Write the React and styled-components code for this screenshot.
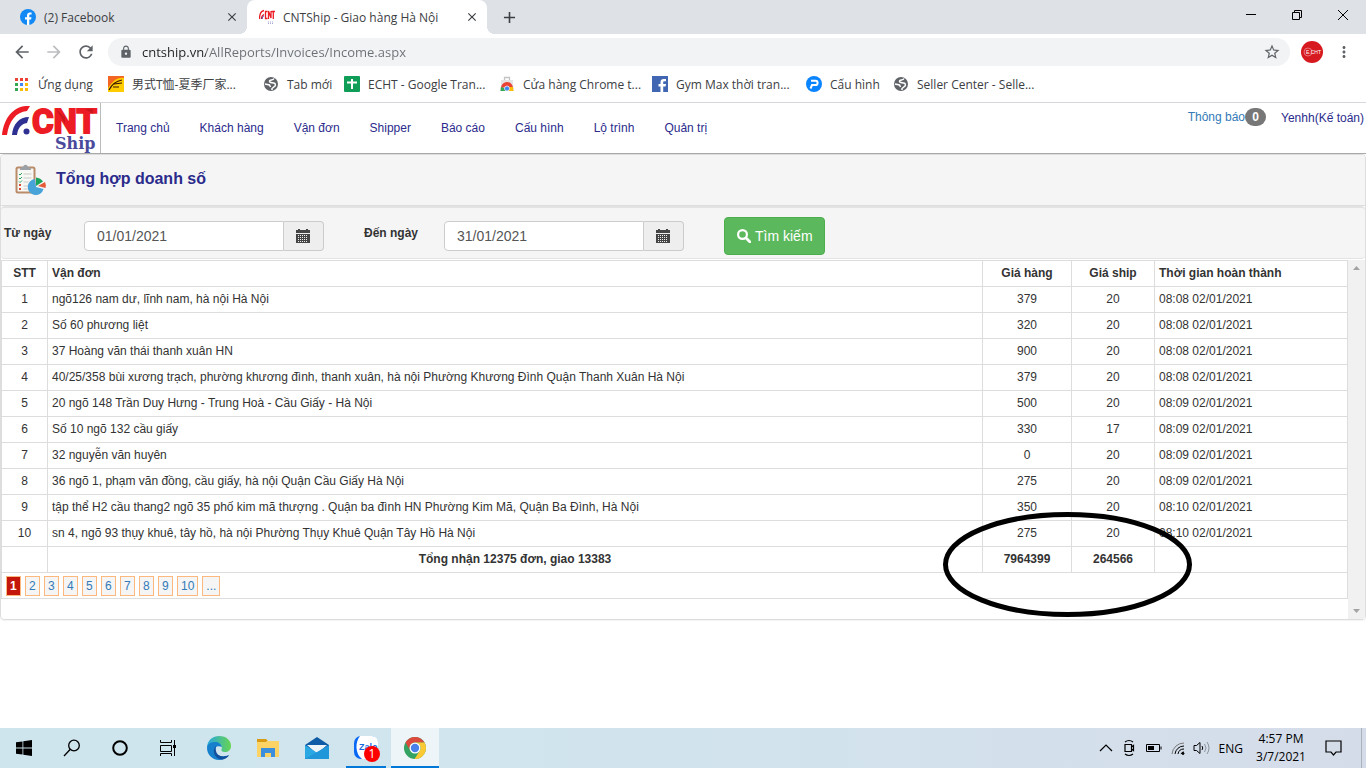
import React from "react";
import styled, { createGlobalStyle } from "styled-components";
import { MdArrowBack, MdArrowForward, MdRefresh, MdLock, MdStarBorder, MdMoreVert, MdClose, MdAdd } from "react-icons/md";

const ui = `"Open Sans", "Noto Sans CJK SC", sans-serif`;
const sans = `"Liberation Sans", Arial, sans-serif`;

const Global = createGlobalStyle`
  *, *::before, *::after { box-sizing: border-box; }
  body { margin: 0; background: #fff; font-family: ${sans}; font-size: 12px; color: #333; }
  button, input { font: inherit; }
  button { border: 0; padding: 0; background: none; color: inherit; }
  a { text-decoration: none; }
  svg { display: block; flex: none; }
`;

const Screen = styled.div`
  min-height: 100vh;
  display: flex;
  flex-direction: column;
`;

/* ---------- Browser ---------- */

const TabStrip = styled.div`
  height: 34px;
  display: flex;
  align-items: stretch;
  padding-left: 8px;
  background: #dee1e6;
  font-family: ${ui};
`;

const Tab = styled.div`
  position: relative;
  width: ${(p) => (p.$active ? 240 : 239)}px;
  display: flex;
  align-items: center;
  gap: 8px;
  padding: 0 9px 0 12px;
  color: #3c4043;
  background: ${(p) => (p.$active ? "#fff" : "transparent")};
  border-radius: 8px 8px 0 0;

  &::before, &::after {
    content: "";
    display: ${(p) => (p.$active ? "block" : "none")};
    position: absolute;
    bottom: 0;
    width: 8px;
    height: 8px;
  }
  &::before { left: -8px; background: radial-gradient(circle at 0 0, transparent 8px, #fff 8px); }
  &::after { right: -8px; background: radial-gradient(circle at 100% 0, transparent 8px, #fff 8px); }
`;

const TabTitle = styled.span`
  flex: 1;
  white-space: nowrap;
  overflow: hidden;
`;

const IconButton = styled.button`
  display: flex;
  align-items: center;
  justify-content: center;
  width: ${(p) => p.$w || 32}px;
  color: ${(p) => p.$color || "#5f6368"};
`;

const NewTab = styled(IconButton)`
  margin-left: 6px;
`;

const WindowButtons = styled.div`
  display: flex;
  margin-left: auto;
  height: 30px;
  color: #000;
`;

const Toolbar = styled.div`
  height: 36px;
  display: flex;
  align-items: center;
  padding: 0 6px;
  font-family: ${ui};
`;

const Address = styled.label`
  flex: 1;
  height: 28px;
  display: flex;
  align-items: center;
  gap: 9px;
  margin: 0 6px;
  padding: 0 9px 0 11px;
  border-radius: 14px;
  background: #f1f3f4;
  color: #5f6368;
`;

const AddressInput = styled.input`
  flex: 1;
  min-width: 0;
  border: 0;
  padding: 0;
  outline: 0;
  font-size: 13px;
  background: linear-gradient(to right, #202124 64px, #6b6f74 64px);
  background-clip: text;
  -webkit-background-clip: text;
  -webkit-text-fill-color: transparent;
`;

const Bookmarks = styled.nav`
  height: 33px;
  display: flex;
  align-items: center;
  padding: 0 0 4px 13px;
  border-bottom: 1px solid #d5d7da;
  font-family: ${ui};
`;

const Bookmark = styled.a`
  width: ${(p) => p.$w}px;
  display: flex;
  align-items: center;
  gap: 8px;
  color: #3c4043;
  white-space: nowrap;
`;

/* ---------- Site header ---------- */

const SiteHeader = styled.header`
  height: 51px;
  display: flex;
  border-bottom: 1px solid #a9a9a9;
`;

const Brand = styled.a`
  width: 101px;
  border-right: 1px solid #bbb;
`;

const MainNav = styled.nav`
  display: flex;
  align-items: center;
`;

const NavLink = styled.a`
  padding: 0 15px;
  color: #2b2b8c;
`;

const Account = styled.div`
  display: flex;
  align-items: flex-start;
  gap: 15px;
  margin-left: auto;
  padding: 4px 2px 0 0;
  line-height: 20px;
`;

const Notice = styled.a`
  display: flex;
  align-items: center;
  color: #337ab7;
`;

const Badge = styled.span`
  width: 21px;
  height: 18px;
  border-radius: 9px;
  background: #777;
  color: #fff;
  font-weight: bold;
  line-height: 18px;
  text-align: center;
`;

const UserLink = styled.a`
  color: #2b2b8c;
  padding-top: 1px;
`;

/* ---------- Report ---------- */

const Panel = styled.main`
  display: flex;
  flex-direction: column;
  border: 1px solid #ddd;
  border-radius: 4px;
  box-shadow: 0 1px 1px rgba(0, 0, 0, 0.05);
`;

const PanelHeading = styled.div`
  height: 51px;
  display: flex;
  align-items: center;
  gap: 8px;
  padding: 0 13px;
  background: #f5f5f5;
  border-bottom: 1px solid #ddd;
  border-radius: 4px 4px 0 0;
`;

const Title = styled.h1`
  margin: 0;
  padding-bottom: 2px;
  font-size: 16px;
  line-height: 20px;
  color: #2b2b8c;
`;

const Filters = styled.form`
  height: 53px;
  display: flex;
  align-items: flex-start;
  gap: 40px;
  padding: 9px 3px;
  margin-bottom: 1px;
  background: #f5f5f5;
  border: 1px solid #e3e3e3;
  border-width: 2px 0 1px;
  border-radius: 4px;
`;

const Field = styled.div`
  display: flex;
`;

const FieldLabel = styled.label`
  width: 80px;
  padding-top: 9px;
  font-weight: bold;
`;

const DateBox = styled.div`
  display: flex;
  height: 30px;
  margin-top: 4px;
`;

const DateInput = styled.input`
  width: 200px;
  padding: 0 12px;
  border: 1px solid #ccc;
  border-radius: 4px 0 0 4px;
  background: #fff;
  color: #555;
  font-size: 14px;
  outline: 0;
`;

const DateButton = styled.button`
  width: 40px;
  display: flex;
  align-items: center;
  padding-left: 12px;
  border: 1px solid #ccc;
  border-left: 0;
  border-radius: 0 4px 4px 0;
  background: #eee;
  color: #555;
`;

const SearchButton = styled.button`
  height: 38px;
  display: flex;
  align-items: center;
  gap: 4px;
  padding: 0 11px 0 12px;
  border: 1px solid #4cae4c;
  border-radius: 4px;
  background: #5cb85c;
  color: #fff;
  font-size: 14px;
`;

const Results = styled.section`
  position: relative;
  display: flex;
  align-items: stretch;
  min-height: 359px;
`;

const TableArea = styled.div`
  flex: 1;
`;

const Table = styled.table`
  width: 100%;
  table-layout: fixed;
  border-collapse: collapse;
  border: 1px solid #ddd;
`;

const Col = styled.col`
  width: ${(p) => (p.$w ? p.$w + "px" : "auto")};
`;

const cell = `
  height: 26px;
  padding: 0 4px;
  border: 1px solid #ddd;
  line-height: 17px;
`;

const Th = styled.th`
  ${cell}
  text-align: ${(p) => p.$align || "center"};
`;

const Td = styled.td`
  ${cell}
  text-align: ${(p) => p.$align || "center"};
  font-weight: ${(p) => (p.$bold ? "bold" : "normal")};
`;

const Pager = styled.div`
  display: flex;
  gap: 4px;
`;

const PageLink = styled.a`
  min-width: 15px;
  height: 20px;
  padding: 0 3px;
  border: 1px solid #fdb97d;
  background: ${(p) => (p.$current ? "#c4160b" : "#f5f5f5")};
  color: ${(p) => (p.$current ? "#fff" : "#337ab7")};
  font-weight: ${(p) => (p.$current ? "bold" : "normal")};
  line-height: 18px;
`;

const Scrollbar = styled.div`
  width: 17px;
  display: flex;
  flex-direction: column;
  justify-content: space-between;
  align-items: center;
  padding: 6px 0;
  background: #f1f1f1;
`;

const Marker = styled.svg`
  position: absolute;
  top: 252px;
  right: 173px;
  pointer-events: none;
`;

/* ---------- Taskbar ---------- */

const Taskbar = styled.footer`
  height: 40px;
  margin-top: auto;
  display: flex;
  background: linear-gradient(to right, #cfe5ed, #d0e5ed 35%, #d3e1ec 70%, #d5dce9);
  color: #000;
  font-family: ${ui};
`;

const TaskButton = styled.button`
  width: 48px;
  display: flex;
  align-items: center;
  justify-content: center;
  background: ${(p) => (p.$active ? "#eef5f9" : "none")};
`;

const Apps = styled.div`
  display: flex;
  padding-left: 2px;
`;

const AppButton = styled(TaskButton)`
  width: ${(p) => (p.$active ? 48 : 49)}px;
  box-shadow: ${(p) => (p.$active ? "inset 0 -2px #0078d7" : "none")};
`;

const OpenApp = styled(TaskButton)`
  width: 40px;
  margin: 0 5px;
  box-shadow: inset 0 -2px #0078d7;
`;

const Tray = styled.div`
  display: flex;
  align-items: center;
  gap: 8px;
  margin-left: auto;
`;

const Clock = styled.div`
  width: 52px;
  margin: 0 10px 0 4px;
  text-align: center;
  line-height: 18px;
  white-space: nowrap;
`;

const ShowDesktop = styled.div`
  width: 5px;
  align-self: stretch;
  margin-left: 11px;
  border-left: 1px solid #a9b2bd;
`;

/* ---------- Drawings ---------- */

const FacebookRound = () => (
  <svg width="16" height="16" viewBox="0 0 16 16">
    <circle cx="8" cy="8" r="8" fill="#1289f4" />
    <path d="M7 16v-5.500H5V8.200h2V6.500C7 4.400 8.200 3.400 10 3.400l1.600.1v2h-1.100c-1 0-1.200.5-1.200 1.200v1.500h2.200l-.4 2.300H9.300V16z" fill="#fff" />
  </svg>
);

const CntLogo = () => (
  <svg width="100" height="50" viewBox="0 0 100 50">
    <path d="M2 32C4 15 13 4 26 3h4l-3 5C16 9 9 18 7 32z" fill="#ed1c24" />
    <path d="M12 32c1-11 7-18 17-18l-2 6c-6 1-9 5-10 12z" fill="#2e3192" />
    <circle cx="26.500" cy="28.500" r="3" fill="#2e3192" />
    <text x="32" y="30" fontFamily="Roboto, sans-serif" fontWeight="bold" fontSize="33" fill="#ed1c24" stroke="#ed1c24" strokeWidth="2">CNT</text>
    <path d="M85 6h8v5zM56 6l9 15v-7z" fill="#b5121b" opacity=".6" />
    <text x="55" y="46" fontFamily="'DejaVu Serif', serif" fontWeight="bold" fontSize="16" fill="#4a4a9c">Ship</text>
  </svg>
);

const CntFavicon = () => (
  <svg width="16" height="16" viewBox="0 0 16 16">
    <path d="M.5 10C.5 5 2 2 5 1.500M2.500 10c0-3 1-4 2.500-4.500" fill="none" stroke="#ed1c24" strokeWidth="1.300" />
    <path d="M3 10c0-2 1-3 2-3" fill="none" stroke="#2e3192" />
    <path d="M8.500 2.500H6.500v7h2M9.500 10V2l2.500 7V2M12.500 2.500H16M14.300 2v8" fill="none" stroke="#ed1c24" strokeWidth="1.300" />
    <path d="M9 13h6M9 14.500h6" stroke="#a9a9d6" strokeDasharray="1 1" />
  </svg>
);

const AppsGrid = () => (
  <svg width="17" height="16" viewBox="0 0 17 16">
    {["#ea4335", "#ea4335", "#ea4335", "#34a853", "#4285f4", "#fbbc04", "#34a853", "#fbbc04", "#fbbc04"].map((c, i) => (
      <rect key={i} x={2 + (i % 3) * 5} y={2 + Math.floor(i / 3) * 5} width="3" height="3" fill={c} />
    ))}
  </svg>
);

const ShopIcon = () => (
  <svg width="16" height="16" viewBox="0 0 16 16">
    <path d="M0 0h16v16H0z" fill="#fc0" />
    <path d="M0 0h16v2C9 1 5 5 0 12z" fill="#f26522" />
    <path d="M1 14C4 8 8 5 14 4M6 8l8-1M5 11l6 0" stroke="#381400" strokeWidth="1.200" fill="none" />
  </svg>
);

const Globe = () => (
  <svg width="16" height="16" viewBox="0 0 16 16">
    <circle cx="8" cy="8" r="7" fill="#5f6368" />
    <path d="M11 2.500c-1 2-4 1-4.500 2.500S9 7 10.500 7 13 8.500 12 10l-3 2.500v1.500M2 8l4.500 1 1 2" fill="none" stroke="#fff" strokeWidth="1.500" />
  </svg>
);

const SheetPlus = () => (
  <svg width="16" height="16" viewBox="0 0 16 16">
    <rect width="16" height="16" rx="1" fill="#0f9d58" />
    <path d="M8 3v10M3 6.500h10" stroke="#fff" strokeWidth="2" />
  </svg>
);

const StoreBag = () => (
  <svg width="16" height="16" viewBox="0 0 16 16">
    <path d="M5.500 4V1.500h5V4" fill="none" stroke="#c4c4c4" strokeWidth="1.300" />
    <path d="M2 4h12v4l1 7H1l1-7z" fill="#e4e4e4" />
    <path d="M2 12a6 6 0 0 1 12 0l-6-1z" fill="#ea4335" />
    <path d="M1.500 15l.5-4 3 1 3 3z" fill="#34a853" />
    <path d="M14.500 15l-.5-4-4 0-2 4z" fill="#fbbc04" />
    <circle cx="8" cy="12.500" r="2.500" fill="#4285f4" stroke="#fff" strokeWidth=".7" />
  </svg>
);

const FacebookSquare = () => (
  <svg width="16" height="16" viewBox="0 0 16 16">
    <rect width="16" height="16" fill="#4267b2" />
    <path d="M8.500 16v-5.500h-2V8h2V6.200C8.500 4.200 9.700 3 11.600 3H14v2.300h-1.500c-1 0-1.300.5-1.300 1.300V8H14l-.4 2.500h-2.400V16z" fill="#fff" />
  </svg>
);

const PIcon = () => (
  <svg width="16" height="16" viewBox="0 0 16 16">
    <circle cx="8" cy="8" r="8" fill="#0a84ff" />
    <path d="M5 4.800h4.500a2 2 0 0 1 0 4.200H6L4.500 12.500" fill="none" stroke="#fff" strokeWidth="2" />
  </svg>
);

const ReportIcon = () => (
  <svg width="34" height="32" viewBox="0 0 34 32">
    <rect x="2.500" y="3.500" width="18" height="25" rx="1.500" fill="#f7f7f4" stroke="#b98b68" strokeWidth="2" />
    <path d="M6 6c0-3 2-3 3-3 1-3 4-3 5 0 1 0 3 0 3 3z" fill="#9aa0a5" />
    <path d="M5 10l1 1 2-2M5 14l1 1 2-2M5 17.500l1 1 2-2" stroke="#25a565" fill="none" />
    <path d="M5 20l2 2m0-2l-2 2M5 24l2 2m0-2l-2 2" stroke="#d94b38" />
    <path d="M9.500 10h8M9.500 14h8M9.500 18h5M9.500 22h5M9.500 25h5" stroke="#c9c9c9" />
    <path d="M22 23l-1-8a8 8 0 1 0 8.500 10z" fill="#47a3d8" />
    <path d="M22 22V13.500a9 8 0 0 1 7 4z" fill="#1aa35a" />
    <path d="M24 22l7-4a8 8 0 0 1 .5 6z" fill="#e65a37" />
  </svg>
);

const CalendarIcon = () => (
  <svg width="14" height="14" viewBox="0 0 14 14" fill="#444">
    <path d="M0 1h2V0h2v1h6V0h2v1h2v3H0z" />
    <path fillRule="evenodd" d="M0 5h14v9H0zM2 6v1h1V6zm2 0v1h1V6zm2 0v1h1V6zm2 0v1h1V6zm2 0v1h1V6zM2 8v1h1V8zm2 0v1h1V8zm2 0v1h1V8zm2 0v1h1V8zm2 0v1h1V8zM2 10v1h1v-1zm2 0v1h1v-1zm2 0v1h1v-1zm2 0v1h1v-1zm2 0v1h1v-1zM2 12v1h1v-1zm2 0v1h1v-1zm2 0v1h1v-1zm2 0v1h1v-1zm2 0v1h1v-1z" />
  </svg>
);

const SearchIcon = () => (
  <svg width="14" height="14" viewBox="0 0 14 14" fill="none" stroke="#fff">
    <circle cx="5.500" cy="5.500" r="4.400" strokeWidth="2.200" />
    <path d="M9 9l4 4" strokeWidth="2.800" strokeLinecap="round" />
  </svg>
);

const Arrow = ({ down }) => (
  <svg width="7" height="4" viewBox="0 0 7 4">
    <path d={down ? "M0 0h7L3.500 4z" : "M0 4h7L3.500 0z"} fill="#a3a3a3" />
  </svg>
);

const ChromeIcon = () => (
  <svg width="24" height="24" viewBox="0 0 24 24">
    <circle cx="12" cy="12" r="11" fill="#34a262" />
    <path d="M2.500 6.500A11 11 0 0 1 21.500 6.500H12a5.500 5.500 0 0 0-4.800 8.200z" fill="#dc4a3d" />
    <path d="M21.500 6.500A11 11 0 0 1 11.500 23l5.300-8.200A5.500 5.500 0 0 0 12 6.500z" fill="#fbc934" />
    <circle cx="12" cy="12" r="5.500" fill="#fff" />
    <circle cx="12" cy="12" r="4.200" fill="#4a80ea" />
  </svg>
);

const EdgeIcon = () => (
  <svg width="24" height="24" viewBox="0 0 24 24">
    <defs>
      <linearGradient id="edge" x1="0" x2="1">
        <stop offset="0" stopColor="#2aa6e0" />
        <stop offset="1" stopColor="#66d552" />
      </linearGradient>
    </defs>
    <path d="M0 12C0 4 6 0 12 0c8 0 12 5 12 10 0 4-3 6-6 6-3 0-4-1-3.500-2.500C16 10 13 7 9 7c-5 0-9 2-9 5z" fill="url(#edge)" />
    <path d="M0 12c0-4 4-6 8-6 4 0 6 2 7 5-4-2-8 0-7 4 1 5 7 7 14 4-2 3-6 5-10 5C5 24 0 18 0 12z" fill="#1680cd" />
    <path d="M9 10c-5 5-1 13 6 13.500 3-.5 6-2 7-4.500-6 3-12 1-13-4-.5-2 0-4 0-5z" fill="#124f9d" />
  </svg>
);

const ZaloIcon = () => (
  <svg width="28" height="28" viewBox="0 0 28 28">
    <rect x="2" y="2" width="24" height="23" rx="7" fill="#0a68f5" />
    <path d="M8 2h12a6 6 0 0 1 6 6v11a6 6 0 0 1-6 6H10C3 20 3 8 8 2z" fill="#fff" />
    <text x="7" y="16" fontFamily={sans} fontWeight="bold" fontSize="9" fill="#1769e0">Zalo</text>
    <circle cx="20" cy="20" r="8" fill="#f00" />
    <text x="20" y="24" fontFamily="'Open Sans', sans-serif" fontSize="12" textAnchor="middle" fill="#fff">1</text>
  </svg>
);

/* ---------- Data ---------- */

const bookmarks = [
  ["Ứng dụng", 95, AppsGrid],
  ["男式T恤-夏季厂家...", 155, ShopIcon],
  ["Tab mới", 81, Globe],
  ["ECHT - Google Tran...", 155, SheetPlus],
  ["Cửa hàng Chrome t...", 153, StoreBag],
  ["Gym Max thời tran...", 154, FacebookSquare],
  ["Cấu hình", 87, PIcon],
  ["Seller Center - Selle...", 150, Globe],
];

const menu = ["Trang chủ", "Khách hàng", "Vận đơn", "Shipper", "Báo cáo", "Cấu hình", "Lộ trình", "Quản trị"];

const rows = [
  ["ngõ126 nam dư, lĩnh nam, hà nội Hà Nội", 379, 20, "08:08 02/01/2021"],
  ["Số 60 phương liệt", 320, 20, "08:08 02/01/2021"],
  ["37 Hoàng văn thái thanh xuân HN", 900, 20, "08:08 02/01/2021"],
  ["40/25/358 bùi xương trạch, phường khương đình, thanh xuân, hà nội Phường Khương Đình Quận Thanh Xuân Hà Nội", 379, 20, "08:08 02/01/2021"],
  ["20 ngõ 148 Trần Duy Hưng - Trung Hoà - Cầu Giấy - Hà Nội", 500, 20, "08:09 02/01/2021"],
  ["Số 10 ngõ 132 cầu giấy", 330, 17, "08:09 02/01/2021"],
  ["32 nguyễn văn huyên", 0, 20, "08:09 02/01/2021"],
  ["36 ngõ 1, phạm văn đồng, cầu giấy, hà nội Quận Cầu Giấy Hà Nội", 275, 20, "08:09 02/01/2021"],
  ["tập thể H2 cầu thang2 ngõ 35 phố kim mã thượng . Quận ba đình HN Phường Kim Mã, Quận Ba Đình, Hà Nội", 350, 20, "08:10 02/01/2021"],
  ["sn 4, ngõ 93 thụy khuê, tây hồ, hà nội Phường Thụy Khuê Quận Tây Hồ Hà Nội", 275, 20, "08:10 02/01/2021"],
];

const pages = ["1", "2", "3", "4", "5", "6", "7", "8", "9", "10", "..."];

function DateField({ id, label, value }) {
  return (
    <Field>
      <FieldLabel htmlFor={id}>{label}</FieldLabel>
      <DateBox>
        <DateInput id={id} type="text" defaultValue={value} />
        <DateButton type="button" aria-label={label}><CalendarIcon /></DateButton>
      </DateBox>
    </Field>
  );
}

function Browser() {
  return (
    <>
      <TabStrip>
        <Tab>
          <FacebookRound />
          <TabTitle>(2) Facebook</TabTitle>
          <IconButton $w={12} $color="#3c4043" aria-label="Close tab"><MdClose size={14} /></IconButton>
        </Tab>
        <Tab $active>
          <CntFavicon />
          <TabTitle>CNTShip - Giao hàng Hà Nội</TabTitle>
          <IconButton $w={12} $color="#3c4043" aria-label="Close tab"><MdClose size={14} /></IconButton>
        </Tab>
        <NewTab $color="#3c4043" aria-label="New tab"><MdAdd size={19} /></NewTab>
        <WindowButtons>
          <IconButton $w={46} $color="#000" aria-label="Minimize">
            <svg width="10" height="10"><path d="M0 4.500h10" stroke="#000" /></svg>
          </IconButton>
          <IconButton $w={46} $color="#000" aria-label="Restore">
            <svg width="10" height="10" fill="none" stroke="#000"><path d="M.5 2.500h7v7h-7zM2.500 2.500v-2h7v7h-2" /></svg>
          </IconButton>
          <IconButton $w={46} $color="#000" aria-label="Close">
            <svg width="10" height="10" stroke="#000"><path d="M0 0l10 10M10 0L0 10" /></svg>
          </IconButton>
        </WindowButtons>
      </TabStrip>
      <Toolbar>
        <IconButton aria-label="Back"><MdArrowBack size={20} /></IconButton>
        <IconButton $color="#bbbdbf" aria-label="Forward"><MdArrowForward size={20} /></IconButton>
        <IconButton aria-label="Reload"><MdRefresh size={20} /></IconButton>
        <Address>
          <MdLock size={14} />
          <AddressInput type="text" aria-label="Address" defaultValue="cntship.vn/AllReports/Invoices/Income.aspx" />
          <MdStarBorder size={18} />
        </Address>
        <IconButton aria-label="Profile">
          <svg width="22" height="22" viewBox="0 0 22 22">
            <circle cx="11" cy="11" r="11" fill="#d71920" />
            <circle cx="7" cy="11" r="4" fill="none" stroke="#f29a9d" strokeWidth=".7" />
            <text x="5" y="13" fontFamily={sans} fontSize="5" fill="#fff">E.CHT</text>
          </svg>
        </IconButton>
        <IconButton aria-label="Menu"><MdMoreVert size={18} /></IconButton>
      </Toolbar>
      <Bookmarks>
        {bookmarks.map(([name, w, Icon]) => (
          <Bookmark key={name} href="#" $w={w}><Icon />{name}</Bookmark>
        ))}
      </Bookmarks>
    </>
  );
}

function Report() {
  return (
    <Panel>
      <PanelHeading>
        <ReportIcon />
        <Title>Tổng hợp doanh số</Title>
      </PanelHeading>
      <Filters>
        <DateField id="from" label="Từ ngày" value="01/01/2021" />
        <DateField id="to" label="Đến ngày" value="31/01/2021" />
        <SearchButton type="button"><SearchIcon />Tìm kiếm</SearchButton>
      </Filters>
      <Results>
        <TableArea>
          <Table>
            <colgroup>
              <Col $w={46} /><Col /><Col $w={89} /><Col $w={83} /><Col $w={193} />
            </colgroup>
            <thead>
              <tr>
                <Th>STT</Th>
                <Th $align="left">Vận đơn</Th>
                <Th>Giá hàng</Th>
                <Th>Giá ship</Th>
                <Th $align="left">Thời gian hoàn thành</Th>
              </tr>
            </thead>
            <tbody>
              {rows.map(([address, price, ship, time], i) => (
                <tr key={i}>
                  <Td>{i + 1}</Td>
                  <Td $align="left">{address}</Td>
                  <Td>{price}</Td>
                  <Td>{ship}</Td>
                  <Td $align="left">{time}</Td>
                </tr>
              ))}
              <tr>
                <Td />
                <Td $bold>Tổng nhận 12375 đơn, giao 13383</Td>
                <Td $bold>7964399</Td>
                <Td $bold>264566</Td>
                <Td />
              </tr>
              <tr>
                <Td colSpan={5} $align="left">
                  <Pager>
                    {pages.map((p, i) => <PageLink key={p} href="#" $current={i === 0}>{p}</PageLink>)}
                  </Pager>
                </Td>
              </tr>
            </tbody>
          </Table>
        </TableArea>
        <Scrollbar><Arrow /><Arrow down /></Scrollbar>
        <Marker width="249" height="105" viewBox="0 0 249 105">
          <ellipse cx="124.500" cy="52.500" rx="122" ry="50" fill="none" stroke="#000" strokeWidth="5" />
        </Marker>
      </Results>
    </Panel>
  );
}

function WindowsTaskbar() {
  return (
    <Taskbar>
      <TaskButton aria-label="Start">
        <svg width="16" height="16" viewBox="0 0 16 16"><path d="M0 2.300L6.500 1.400v6.200H0zM7.300 1.300L16 0v7.600H7.300zM0 8.400h6.500v6.200L0 13.700zM7.300 8.400H16V16l-8.700-1.300z" /></svg>
      </TaskButton>
      <TaskButton aria-label="Search">
        <svg width="18" height="18" viewBox="0 0 18 18" fill="none" stroke="#000" strokeWidth="1.300"><circle cx="11" cy="6.500" r="5.300" /><path d="M7.300 10.300L1 17" /></svg>
      </TaskButton>
      <TaskButton aria-label="Cortana">
        <svg width="16" height="16" viewBox="0 0 16 16"><circle cx="8" cy="8" r="6.800" fill="none" stroke="#000" strokeWidth="2" /></svg>
      </TaskButton>
      <TaskButton aria-label="Task view">
        <svg width="17" height="16" viewBox="0 0 17 16" fill="none" stroke="#000"><path d="M.5 0v2.500h11V0M.5 5.500h11v6H.5zM.5 16v-2.500h11V16M14.500 0v16" /><path d="M13 5h3v3h-3z" fill="#000" stroke="none" /></svg>
      </TaskButton>
      <Apps>
        <AppButton aria-label="Edge"><EdgeIcon /></AppButton>
        <AppButton aria-label="Explorer">
          <svg width="22" height="20" viewBox="0 0 22 20">
            <path d="M0 1h9l2 2h11v16H0z" fill="#fdd366" /><path d="M0 1h9l1.500 1.500L9 4H0z" fill="#d99a14" />
            <path d="M4 10h14v9h-4v-4H8v4H4z" fill="#3c8fdc" />
          </svg>
        </AppButton>
        <AppButton aria-label="Mail">
          <svg width="24" height="23" viewBox="0 0 24 23">
            <path d="M12 0l12 8v14H0V8z" fill="#0f5ba5" />
            <path d="M2 8h20l-9 8h-2z" fill="#eef5f9" />
            <path d="M0 8l14 9-14 5z" fill="#2aa8e4" />
            <path d="M24 8v14H0z" fill="#1f97d8" />
          </svg>
        </AppButton>
        <OpenApp aria-label="Zalo"><ZaloIcon /></OpenApp>
        <AppButton $active aria-label="Chrome"><ChromeIcon /></AppButton>
      </Apps>
      <Tray>
        <svg width="14" height="14" viewBox="0 0 14 14" fill="none" stroke="#000" strokeWidth="1.200"><path d="M1 10l6-6 6 6" /></svg>
        <svg width="16" height="18" viewBox="0 0 16 18" fill="none" stroke="#000" strokeWidth="1.200"><path d="M4 3q4-3 8 0M4 15q4 3 8 0M4 5.500h6.500v7H4zM10.500 8l2-1.500v5l-2-1.500" /></svg>
        <svg width="18" height="10" viewBox="0 0 18 10" fill="none" stroke="#000"><path d="M1.500 1.500h13v7h-13zM16 3.500v3" /><path d="M3 3h6v4H3z" fill="#000" stroke="none" /></svg>
        <svg width="14" height="14" viewBox="0 0 14 14" fill="none" stroke="#000"><path d="M1 13A12 12 0 0 1 13 2" stroke="#777" /><path d="M4 13a9 9 0 0 1 9-8M7 13a6 6 0 0 1 6-5M10 13a3 3 0 0 1 3-2" /><circle cx="12" cy="12.500" r="1" fill="#000" /></svg>
        <svg width="18" height="14" viewBox="0 0 18 14" fill="none" stroke="#000"><path d="M1 4.500h2.500L7 1.500v11l-3.500-3H1zM9 5q1.500 2 0 4" /><path d="M11.500 3q3 4 0 8M14 1q4 6 0 12" stroke="#8b949c" /></svg>
        <span>ENG</span>
        <Clock>4:57 PM<br />3/7/2021</Clock>
        <svg width="17" height="17" viewBox="0 0 17 17" fill="none" stroke="#000" strokeWidth="1.200"><path d="M1 1h15v11h-5l-2.500 3L6 12H1z" /></svg>
        <ShowDesktop />
      </Tray>
    </Taskbar>
  );
}

export default function App() {
  return (
    <Screen>
      <Global />
      <Browser />
      <SiteHeader>
        <Brand href="#" aria-label="CNT Ship"><CntLogo /></Brand>
        <MainNav>
          {menu.map((m) => <NavLink key={m} href="#">{m}</NavLink>)}
        </MainNav>
        <Account>
          <Notice href="#">Thông báo<Badge>0</Badge></Notice>
          <UserLink href="#">Yenhh(Kế toán)</UserLink>
        </Account>
      </SiteHeader>
      <Report />
      <WindowsTaskbar />
    </Screen>
  );
}
